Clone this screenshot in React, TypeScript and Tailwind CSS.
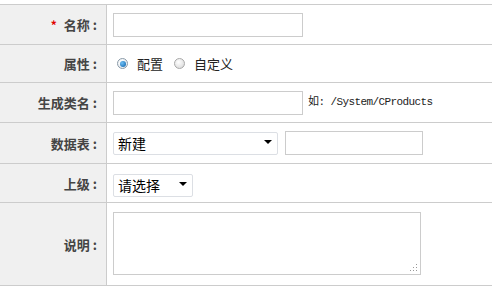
import type React from "react"

const labelFont = "font-['Noto_Sans_CJK_SC',sans-serif]"

function Row({
  label,
  required,
  height,
  children,
}: {
  label: string
  required?: boolean
  height: string
  children: React.ReactNode
}) {
  return (
    <div className={`flex border-b border-[#cccccc] ${height}`}>
      <div className="w-[107px] shrink-0 bg-[#f0f0f0] border-r border-[#cccccc] flex items-center justify-end pr-[9px]">
        <span className="text-[13px] font-bold text-[#444] leading-none flex items-center">
          {required && <span className="text-[#e00000] text-[12px] mr-[7px]">*</span>}
          {label}
          <span className="ml-[3px]">:</span>
        </span>
      </div>
      <div className="flex-1 flex items-center pl-[6px]">{children}</div>
    </div>
  )
}

function Radio({ checked, label }: { checked?: boolean; label: string }) {
  return (
    <label className="flex items-center mr-[11px]">
      <span
        className={`w-[11px] h-[11px] rounded-full border flex items-center justify-center ${
          checked
            ? "border-[#8a9aa8] bg-[radial-gradient(circle_at_40%_35%,#ffffff,#dfe6ec)]"
            : "border-[#a8a8a8] bg-[radial-gradient(circle_at_40%_35%,#ffffff,#d4d4d4)]"
        }`}
      >
        {checked && (
          <span className="w-[6px] h-[6px] rounded-full bg-[radial-gradient(circle_at_35%_35%,#6fc0f5,#0a5ea8)]" />
        )}
      </span>
      <span className="ml-[9px] text-[13px] text-[#222]">{label}</span>
    </label>
  )
}

function Select({ value, width }: { value: string; width: string }) {
  return (
    <div className={`relative ${width} h-[23px]`}>
      <select
        defaultValue={value}
        className="appearance-none w-full h-full border border-[#dcdfe4] rounded-[2px] bg-white pl-[4px] text-[14px] text-black outline-none"
      >
        <option>{value}</option>
      </select>
      <span className="pointer-events-none absolute right-[6px] top-[10px] w-0 h-0 border-l-[4px] border-r-[4px] border-t-[4px] border-l-transparent border-r-transparent border-t-black" />
    </div>
  )
}

export default function App() {
  return (
    <div className={`w-[492px] h-[287px] bg-white pt-[4px] ${labelFont}`}>
      <div className="border-t border-[#cccccc]">
        <Row label="名称" required height="h-[40px]">
          <input
            type="text"
            className="w-[190px] h-[24px] border border-[#cccccc] outline-none"
          />
        </Row>
        <Row label="属性" height="h-[38px]">
          <div className="flex items-center pl-[4px]">
            <Radio checked label="配置" />
            <Radio label="自定义" />
          </div>
        </Row>
        <Row label="生成类名" height="h-[40px]">
          <input
            type="text"
            className="w-[190px] h-[24px] border border-[#cccccc] outline-none"
          />
          <span className="ml-[5px] text-[11px] tracking-[-0.6px] text-[#222] font-['Liberation_Mono','Noto_Sans_CJK_SC',monospace]">
            如: /System/CProducts
          </span>
        </Row>
        <Row label="数据表" height="h-[41px]">
          <div className="flex items-start -mt-[2px]">
            <Select value="新建" width="w-[165px]" />
            <input
              type="text"
              className="ml-[7px] mt-[1px] w-[138px] h-[24px] border border-[#cccccc] outline-none"
            />
          </div>
        </Row>
        <Row label="上级" height="h-[39px]">
          <Select value="请选择" width="w-[80px]" />
        </Row>
        <Row label="说明" height="h-[83px]">
          <div className="relative -mt-[2px]">
            <textarea className="block w-[308px] h-[63px] border border-[#cccccc] resize-none outline-none" />
            <svg
              className="absolute right-[3px] bottom-[3px]"
              width="9"
              height="9"
              viewBox="0 0 9 9"
            >
              <rect x="7" y="1" width="1" height="1" fill="#999" />
              <rect x="4" y="4" width="1" height="1" fill="#999" />
              <rect x="7" y="4" width="1" height="1" fill="#999" />
              <rect x="1" y="7" width="1" height="1" fill="#999" />
              <rect x="4" y="7" width="1" height="1" fill="#999" />
              <rect x="7" y="7" width="1" height="1" fill="#999" />
            </svg>
          </div>
        </Row>
      </div>
    </div>
  )
}
